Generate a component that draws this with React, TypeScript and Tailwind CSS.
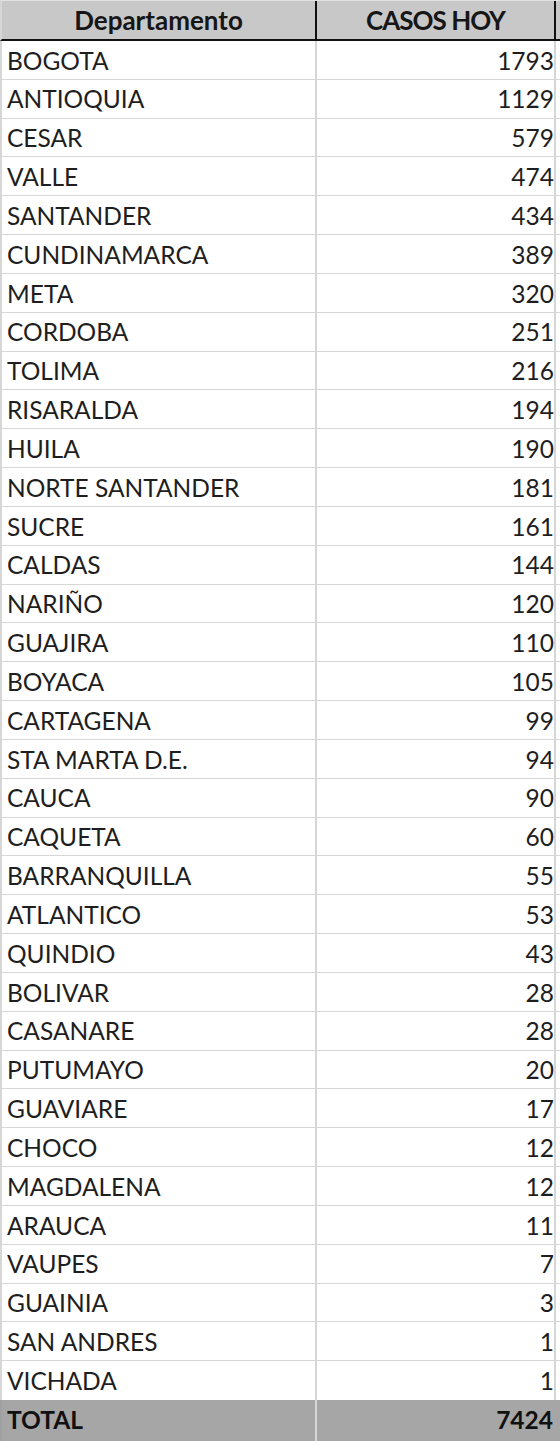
const rows: [string, number][] = [
  ["BOGOTA", 1793],
  ["ANTIOQUIA", 1129],
  ["CESAR", 579],
  ["VALLE", 474],
  ["SANTANDER", 434],
  ["CUNDINAMARCA", 389],
  ["META", 320],
  ["CORDOBA", 251],
  ["TOLIMA", 216],
  ["RISARALDA", 194],
  ["HUILA", 190],
  ["NORTE SANTANDER", 181],
  ["SUCRE", 161],
  ["CALDAS", 144],
  ["NARIÑO", 120],
  ["GUAJIRA", 110],
  ["BOYACA", 105],
  ["CARTAGENA", 99],
  ["STA MARTA D.E.", 94],
  ["CAUCA", 90],
  ["CAQUETA", 60],
  ["BARRANQUILLA", 55],
  ["ATLANTICO", 53],
  ["QUINDIO", 43],
  ["BOLIVAR", 28],
  ["CASANARE", 28],
  ["PUTUMAYO", 20],
  ["GUAVIARE", 17],
  ["CHOCO", 12],
  ["MAGDALENA", 12],
  ["ARAUCA", 11],
  ["VAUPES", 7],
  ["GUAINIA", 3],
  ["SAN ANDRES", 1],
  ["VICHADA", 1],
]

export default function App() {
  const total = rows.reduce((s, r) => s + r[1], 0)

  return (
    <div className="w-[560px] h-[1441px] bg-white font-['Lato',sans-serif] text-[24.5px] leading-none overflow-hidden">
      {/* header */}
      <div className="flex h-[41px] bg-[#c8c8c8] border-t border-[#e2e2e2] border-b-2 border-b-[#111] border-l-2 border-l-[#d6d6d6]">
        <div className="w-[315px] border-r-2 border-[#111] flex items-center justify-center font-bold text-[26px] text-[#161616]">
          Departamento
        </div>
        <div className="w-[239px] border-r-2 border-[#111] flex items-center justify-center font-bold text-[26px] tracking-[-1px] text-[#161616]">
          CASOS HOY
        </div>
      </div>

      {/* body */}
      <div className="flex flex-col">
        {rows.map(([name, n], i) => (
          <div
            key={name}
            className={
              "flex h-[38.83px] border-l-2 border-[#d6d6d6] " +
              (i < rows.length - 1 ? "border-b border-b-[#d6d6d6]" : "")
            }
          >
            <div className="w-[315px] border-r-2 border-[#d6d6d6] flex items-center pl-[5px] pt-[2px] text-[#1e1e1e]">
              {name}
            </div>
            <div className="w-[239px] border-r-2 border-[#d6d6d6] flex items-center justify-end pr-0 pt-[2px] text-[#1e1e1e]">
              {n}
            </div>
          </div>
        ))}
      </div>

      {/* total */}
      <div className="flex h-[41px] bg-[#a6a6a6] border-l-2 border-[#a0a0a0]">
        <div className="w-[315px] border-r-2 border-[#d6d6d6] flex items-center pl-[5px] font-bold text-[#111]">
          TOTAL
        </div>
        <div className="w-[239px] flex items-center justify-end pr-[3px] font-bold text-[#111]">
          {total}
        </div>
      </div>
    </div>
  )
}
